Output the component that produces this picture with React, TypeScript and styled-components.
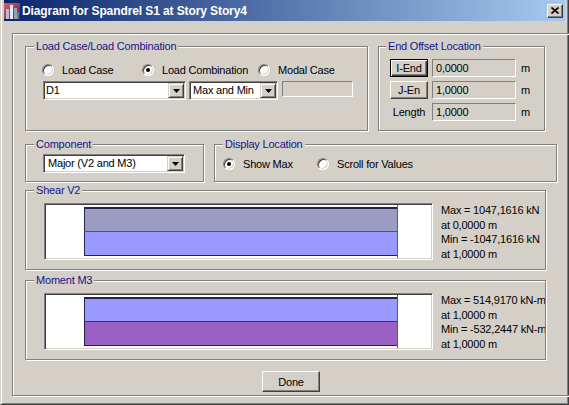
import React from 'react'
import styled, { createGlobalStyle, css } from 'styled-components'

const GlobalStyle = createGlobalStyle`
  html, body {
    margin: 0;
    padding: 0;
    background: #d4d0c8;
  }
  body {
    font-family: "Liberation Sans", Arial, sans-serif;
    font-size: 11px;
    letter-spacing: -0.2px;
    color: #000;
  }
  * {
    box-sizing: border-box;
  }
`

const Window = styled.div`
  width: 569px;
  height: 405px;
  display: flex;
  flex-direction: column;
  background: #d4d0c8;
  border-style: solid;
  border-width: 0 1px 1px 1px;
  border-color: #d4d0c8 #404040 #404040 #d4d0c8;
  box-shadow: inset 1px 0 0 #fff, inset -1px -1px 0 #808080;
  padding: 0 3px 3px 3px;
`

const TitleBar = styled.div`
  height: 21px;
  flex-shrink: 0;
  display: flex;
  align-items: center;
  gap: 2px;
  padding: 0 2px 0 0;
  background: linear-gradient(to right, #0a246a, #a6caf0);
`

const TitleText = styled.span`
  flex: 1;
  color: #fff;
  font-weight: bold;
  font-size: 12px;
  letter-spacing: -0.1px;
  white-space: nowrap;
`

const CloseButton = styled.span`
  width: 16px;
  height: 14px;
  display: flex;
  align-items: center;
  justify-content: center;
  background: #d4d0c8;
  border: 1px solid;
  border-color: #fff #404040 #404040 #fff;
  box-shadow: inset -1px -1px 0 #808080;
`

const Client = styled.div`
  flex: 1;
  display: flex;
  padding: 12px 8px 5px 8px;
`

const Frame = styled.div`
  flex: 1;
  display: flex;
  flex-direction: column;
  padding: 12px 13px 0 12px;
  border: 1px solid #808080;
  box-shadow: inset 1px 1px 0 #fff, 1px 1px 0 #fff;
`

const Row = styled.div<{ $top: number; $h: number }>`
  display: flex;
  gap: 10px;
  margin-top: ${(p) => p.$top}px;
  height: ${(p) => p.$h}px;
  flex-shrink: 0;
`

const GroupBox = styled.div<{ $w: number; $h: number }>`
  position: relative;
  flex-shrink: 0;
  width: ${(p) => p.$w}px;
  height: ${(p) => p.$h}px;
  border: 1px solid #808080;
  box-shadow: inset 1px 1px 0 #fff, 1px 1px 0 #fff;
`

const Caption = styled.span<{ $left?: number }>`
  position: absolute;
  top: -7px;
  left: ${(p) => p.$left ?? 8}px;
  padding: 0 2px;
  line-height: 13px;
  background: #d4d0c8;
  color: #14148c;
  white-space: nowrap;
`

const LoadCaseBox = styled(GroupBox)`
  display: flex;
  flex-direction: column;
  padding: 16px 0 0 16px;
`

const RadioRow = styled.div`
  display: flex;
  align-items: center;
  height: 14px;
`

const RadioOption = styled.label<{ $w?: number }>`
  display: flex;
  align-items: center;
  gap: 8px;
  flex-shrink: 0;
  width: ${(p) => (p.$w ? `${p.$w}px` : 'auto')};
  white-space: nowrap;
`

const RadioDot = styled.span<{ $on?: boolean }>`
  position: relative;
  width: 12px;
  height: 12px;
  flex-shrink: 0;
  border-radius: 50%;
  background: #fff;
  border: 1px solid;
  border-color: #808080 #fff #fff #808080;
  box-shadow: inset 1px 1px 0 #404040, inset -1px -1px 0 #d4d0c8;

  &::after {
    content: '';
    display: ${(p) => (p.$on ? 'block' : 'none')};
    position: absolute;
    left: 3px;
    top: 3px;
    width: 4px;
    height: 4px;
    border-radius: 50%;
    background: #000;
  }
`

const ComboRow = styled.div`
  display: flex;
  align-items: flex-start;
  gap: 3px;
  margin: 4px 0 0 1px;
`

const Combo = styled.div<{ $w: number }>`
  display: flex;
  width: ${(p) => p.$w}px;
  height: 19px;
  flex-shrink: 0;
  padding: 1px;
  background: #fff;
  border: 1px solid;
  border-color: #808080 #fff #fff #808080;
  box-shadow: inset 1px 1px 0 #404040, inset -1px -1px 0 #d4d0c8;
`

const ComboText = styled.span<{ $pad?: number }>`
  flex: 1;
  padding-left: ${(p) => p.$pad ?? 2}px;
  line-height: 15px;
  white-space: nowrap;
  overflow: hidden;
`

const ComboButton = styled.span`
  width: 16px;
  flex-shrink: 0;
  display: flex;
  align-items: center;
  justify-content: center;
  background: #d4d0c8;
  border: 1px solid;
  border-color: #d4d0c8 #404040 #404040 #d4d0c8;
  box-shadow: inset 1px 1px 0 #fff, inset -1px -1px 0 #808080;
`

const Field = styled.div<{ $w: number; $h?: number }>`
  width: ${(p) => p.$w}px;
  height: ${(p) => p.$h ?? 18}px;
  flex-shrink: 0;
  margin-left: ${(p) => (p.$h ? 1 : 0)}px;
  padding-left: 3px;
  line-height: 16px;
  background: #d4d0c8;
  border: 1px solid;
  border-color: #808080 #fff #fff #808080;
`

const OffsetBox = styled(GroupBox)`
  display: grid;
  grid-template-columns: 38px 84px auto;
  grid-auto-rows: 18px;
  column-gap: 4px;
  row-gap: 4px;
  align-content: start;
  align-items: center;
  padding: 12px 0 0 11px;
`

const PushButton = styled.button<{ $default?: boolean }>`
  font: inherit;
  letter-spacing: inherit;
  color: #000;
  margin: 0;
  padding: 0;
  height: 18px;
  background: #d4d0c8;
  border: 1px solid;
  border-color: #fff #404040 #404040 #fff;
  box-shadow: inset -1px -1px 0 #808080;
  white-space: nowrap;

  ${(p) =>
    p.$default &&
    css`
      border-color: #000;
      box-shadow: inset 1px 1px 0 #fff, inset -1px -1px 0 #404040,
        inset -2px -2px 0 #808080;
    `}
`

const GridLabel = styled.span`
  text-align: center;
`

const Unit = styled.span`
  padding-left: 1px;
`

const ComponentBox = styled(GroupBox)`
  padding: 9px 0 0 17px;
`

const DisplayBox = styled(GroupBox)`
  display: flex;
  align-items: flex-start;
  padding: 12px 0 0 8px;

  ${RadioRow} {
    width: 100%;
  }
`

const ChartBox = styled(GroupBox)<{ $top: number }>`
  display: flex;
  align-items: flex-start;
  gap: 8px;
  margin-top: ${(p) => p.$top}px;
  padding: 12px 0 0 18px;
`

const Plot = styled.div`
  width: 389px;
  height: 57px;
  flex-shrink: 0;
  background: #fff;
  border: 1px solid;
  border-color: #808080 #fff #fff #808080;
  box-shadow: inset 1px 1px 0 #404040, inset -1px -1px 0 #d4d0c8;
  padding: 1px;

  svg {
    display: block;
  }
`

const Readout = styled.div`
  width: 104px;
  overflow: hidden;
  white-space: nowrap;
  line-height: 14.7px;
`

const DoneButton = styled(PushButton)`
  align-self: center;
  width: 58px;
  height: 21px;
  margin-top: 11px;
  flex-shrink: 0;
`

const Arrow = () => (
  <svg width="7" height="4" viewBox="0 0 7 4">
    <polygon points="0,0 7,0 3.5,4" fill="#000" />
  </svg>
)

const AppIcon = () => (
  <svg width="16" height="16" viewBox="0 0 16 16">
    <defs>
      <linearGradient id="ico" x1="0" y1="0" x2="1" y2="1">
        <stop offset="0" stopColor="#e05a78" />
        <stop offset="1" stopColor="#5a2040" />
      </linearGradient>
    </defs>
    <rect width="16" height="16" fill="url(#ico)" />
    <rect x="2" y="6" width="3" height="10" fill="#b8bcd0" />
    <rect x="6" y="2" width="3" height="14" fill="#e8eaf4" />
    <rect x="10" y="5" width="3" height="11" fill="#9aa0bc" />
    <rect x="13" y="9" width="2" height="7" fill="#6a7090" />
  </svg>
)

const CloseGlyph = () => (
  <svg width="8" height="7" viewBox="0 0 8 7">
    <path d="M0.5 0.5 L7.5 6.5 M7.5 0.5 L0.5 6.5" stroke="#000" strokeWidth="1.6" />
  </svg>
)

type Chart = {
  title: string
  top: string
  bottom: string
  divider: string
  lines: string[]
}

const charts: Chart[] = [
  {
    title: 'Shear V2',
    top: '#9c9cc2',
    bottom: '#9999ff',
    divider: '#2f6a4c',
    lines: ['Max = 1047,1616 kN', 'at 0,0000 m', 'Min = -1047,1616 kN', 'at 1,0000 m'],
  },
  {
    title: 'Moment M3',
    top: '#9999ff',
    bottom: '#9a60c4',
    divider: '#24405a',
    lines: ['Max = 514,9170 kN-m', 'at 1,0000 m', 'Min = -532,2447 kN-m', 'at 1,0000 m'],
  },
]

const Diagram = ({ chart }: { chart: Chart }) => (
  <svg width="385" height="53" viewBox="0 0 385 53">
    <rect x="38" y="2" width="313" height="25" fill={chart.top} />
    <rect x="38" y="27" width="313" height="24" fill={chart.bottom} />
    <rect x="38" y="2" width="313" height="2" fill="#22224a" />
    <rect x="38" y="50" width="313" height="1" fill="#22224a" />
    <rect x="38" y="2" width="1" height="49" fill="#22224a" />
    <rect x="38" y="26" width="313" height="1" fill={chart.divider} />
    <rect x="351" y="0" width="1" height="53" fill="#2a7a44" />
  </svg>
)

const App = () => (
  <>
    <GlobalStyle />
    <Window>
      <TitleBar>
        <AppIcon />
        <TitleText>Diagram for Spandrel S1 at Story Story4</TitleText>
        <CloseButton>
          <CloseGlyph />
        </CloseButton>
      </TitleBar>
      <Client>
        <Frame>
          <Row $top={0} $h={85}>
            <LoadCaseBox $w={343} $h={85}>
              <Caption>Load Case/Load Combination</Caption>
              <RadioRow>
                <RadioOption $w={100}>
                  <RadioDot />
                  Load Case
                </RadioOption>
                <RadioOption $w={116}>
                  <RadioDot $on />
                  Load Combination
                </RadioOption>
                <RadioOption>
                  <RadioDot />
                  Modal Case
                </RadioOption>
              </RadioRow>
              <ComboRow>
                <Combo $w={143}>
                  <ComboText $pad={1}>D1</ComboText>
                  <ComboButton>
                    <Arrow />
                  </ComboButton>
                </Combo>
                <Combo $w={89}>
                  <ComboText>Max and Min</ComboText>
                  <ComboButton>
                    <Arrow />
                  </ComboButton>
                </Combo>
                <Field $w={71} $h={16} />
              </ComboRow>
            </LoadCaseBox>
            <OffsetBox $w={167} $h={85}>
              <Caption $left={7}>End Offset Location</Caption>
              <PushButton $default>I-End</PushButton>
              <Field $w={84}>0,0000</Field>
              <Unit>m</Unit>
              <PushButton>J-En</PushButton>
              <Field $w={84}>1,0000</Field>
              <Unit>m</Unit>
              <GridLabel>Length</GridLabel>
              <Field $w={84}>1,0000</Field>
              <Unit>m</Unit>
            </OffsetBox>
          </Row>
          <Row $top={13} $h={38}>
            <ComponentBox $w={179} $h={38}>
              <Caption>Component</Caption>
              <Combo $w={142}>
                <ComboText $pad={3}>Major (V2 and M3)</ComboText>
                <ComboButton>
                  <Arrow />
                </ComboButton>
              </Combo>
            </ComponentBox>
            <DisplayBox $w={343} $h={38}>
              <Caption>Display Location</Caption>
              <RadioRow>
                <RadioOption $w={94}>
                  <RadioDot $on />
                  Show Max
                </RadioOption>
                <RadioOption>
                  <RadioDot />
                  Scroll for Values
                </RadioOption>
              </RadioRow>
            </DisplayBox>
          </Row>
          {charts.map((chart, i) => (
            <ChartBox key={chart.title} $w={521} $h={80} $top={i === 0 ? 8 : 10}>
              <Caption>{chart.title}</Caption>
              <Plot>
                <Diagram chart={chart} />
              </Plot>
              <Readout>
                {chart.lines.map((line, j) => (
                  <div key={j}>{line}</div>
                ))}
              </Readout>
            </ChartBox>
          ))}
          <DoneButton>Done</DoneButton>
        </Frame>
      </Client>
    </Window>
  </>
)

export default App
